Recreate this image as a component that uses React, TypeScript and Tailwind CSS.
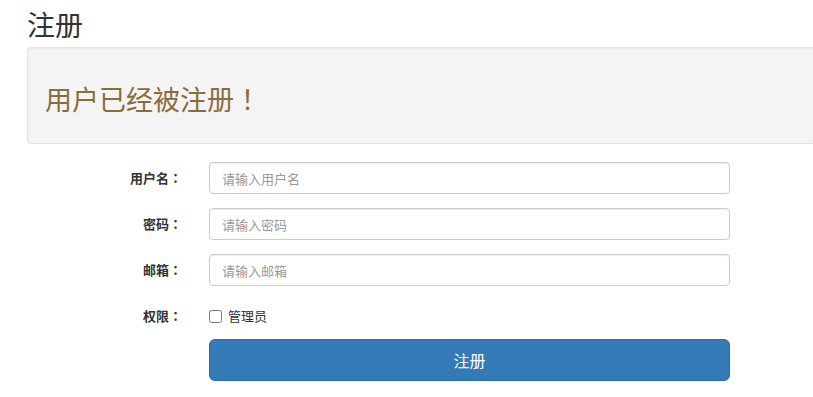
import React from "react";

const font = { fontFamily: '"Noto Sans CJK SC", "Liberation Sans", sans-serif' };
const jp = { fontFamily: '"Noto Sans CJK JP", "Noto Sans CJK SC", sans-serif' };

function P({ c }: { c: string }) {
  return <span style={jp}>{c}</span>;
}

function Row({ label, placeholder }: { label: string; placeholder: string }) {
  return (
    <div className="flex items-center h-[32px]">
      <label className="w-[155px] text-right text-[13px] font-bold text-[#333]">
        {label}
        <P c="：" />
      </label>
      <input
        className="ml-[27px] w-[521px] h-[32px] border border-[#ccc] rounded-[4px] px-[12px] text-[13px] text-[#555] placeholder:text-[#999] outline-none shadow-[inset_0_1px_1px_rgba(0,0,0,0.075)]"
        placeholder={placeholder}
      />
    </div>
  );
}

export default function App() {
  return (
    <div className="w-[813px] h-[397px] overflow-hidden bg-white text-[#333]" style={font}>
      <div className="pl-[27px]">
        <h2 className="text-[28px] leading-[46px] h-[47px] pt-[1px] font-normal text-[#333]">注册</h2>
        <div className="h-[97px] bg-[#f4f4f4] border border-r-0 border-[#e3e3e3] rounded-l-[4px] shadow-[inset_0_1px_1px_rgba(0,0,0,0.05)] flex items-center pl-[17px] pt-[7px]">
          <div className="text-[27px] text-[#8a6d3b]">
            用户已经被注册
            <P c="！" />
          </div>
        </div>
        <div className="mt-[18px] flex flex-col">
          <Row label="用户名" placeholder="请输入用户名" />
          <div className="mt-[14px]">
            <Row label="密码" placeholder="请输入密码" />
          </div>
          <div className="mt-[14px]">
            <Row label="邮箱" placeholder="请输入邮箱" />
          </div>
          <div className="mt-[14px] flex items-center h-[32px]">
            <label className="w-[155px] text-right text-[13px] font-bold text-[#333]">
              权限
              <P c="：" />
            </label>
            <label className="ml-[27px] flex items-center text-[13px] text-[#333]">
              <input type="checkbox" className="w-[13px] h-[13px] m-0" />
              <span className="ml-[6px]">管理员</span>
            </label>
          </div>
          <div className="mt-[7px] pl-[182px]">
            <button className="w-[521px] h-[42px] bg-[#337ab7] border border-[#2e6da4] rounded-[6px] text-white text-[16px]">
              注册
            </button>
          </div>
        </div>
      </div>
    </div>
  );
}
